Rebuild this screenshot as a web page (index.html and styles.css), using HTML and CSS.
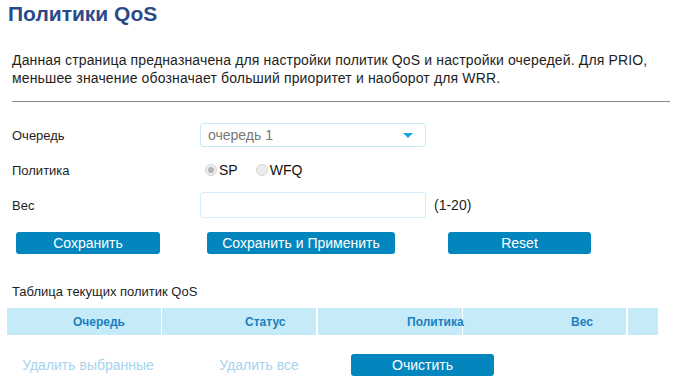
FILE: index.html
```html
<!DOCTYPE html>
<html lang="ru">
<head>
  <meta charset="UTF-8" />
  <title>Политики QoS</title>
  <link rel="stylesheet" href="styles.css">
</head>
<body>

<h1 class="title">Политики QoS</h1>
<p class="desc">Данная страница предназначена для настройки политик QoS и настройки очередей. Для PRIO, меньшее значение обозначает больший приоритет и наоборот для WRR.</p>
<hr class="sep">

<div class="form">
  <div class="row row-queue">
    <label class="lbl">Очередь</label>
    <div class="select">
      <span>очередь 1</span>
      <span class="arrow"></span>
    </div>
  </div>
  <div class="row row-policy">
    <label class="lbl">Политика</label>
    <span class="radio checked"></span><span class="radio-text">SP</span>
    <span class="radio"></span><span class="radio-text">WFQ</span>
  </div>
  <div class="row row-weight">
    <label class="lbl">Вес</label>
    <input class="field" type="text">
    <span class="hint">(1-20)</span>
  </div>
  <div class="btn-row">
    <button class="btn b-save">Сохранить</button>
    <button class="btn b-apply">Сохранить и Применить</button>
    <button class="btn b-reset">Reset</button>
  </div>
</div>

<p class="caption">Таблица текущих политик QoS</p>
<table class="qos">
  <tr>
    <th class="c1">Очередь</th>
    <th class="c2">Статус</th>
    <th class="c3">Политика</th>
    <th class="c4">Вес</th>
    <th class="c5"></th>
  </tr>
</table>

<div class="actions">
  <button class="btn ghost a-sel" disabled>Удалить выбранные</button>
  <button class="btn ghost a-all" disabled>Удалить все</button>
  <button class="btn a-clear">Очистить</button>
</div>

</body>
</html>
```

FILE: styles.css
```css
body {
  margin: 0;
  font-family: "Liberation Sans", Arial, sans-serif;
  color: #1e1e1e;
  background: #fff;
}
.title {
  margin: 0;
  padding: 2px 0 0 8px;
  font-size: 21px;
  line-height: 24px;
  color: #2b4a88;
}
.desc {
  margin: 25px 10px 0 12px;
  font-size: 14px;
  line-height: 18px;
  letter-spacing: 0.15px;
}
.sep {
  margin: 14px 10px 0 12px;
  border: none;
  border-top: 1px solid #8a8a8a;
  height: 0;
}
.form {
  padding-left: 12px;
}
.row {
  display: flex;
  align-items: center;
  font-size: 13px;
}
.row-queue { margin-top: 21px; height: 24px; }
.row-policy { margin-top: 11px; height: 24px; }
.row-weight { margin-top: 10px; height: 26px; }
.lbl {
  width: 188px;
}
.select {
  box-sizing: border-box;
  width: 226px;
  height: 24px;
  border: 1px solid #c8eaf7;
  border-radius: 3px;
  padding: 0 12px 0 7px;
  display: flex;
  align-items: center;
  justify-content: space-between;
  font-size: 14px;
  color: #777;
}
.arrow {
  width: 0;
  height: 0;
  border-left: 5px solid transparent;
  border-right: 5px solid transparent;
  border-top: 5px solid #1fa5e6;
}
.radio {
  box-sizing: border-box;
  width: 12px;
  height: 12px;
  border-radius: 50%;
  border: 1px solid #d6d6d6;
  background: #ececec;
  margin-left: 5px;
  position: relative;
}
.radio + .radio-text + .radio {
  margin-left: 18px;
}
.radio.checked::after {
  content: "";
  position: absolute;
  left: 2px;
  top: 2px;
  width: 6px;
  height: 6px;
  border-radius: 50%;
  background: #b5b5b5;
}
.radio-text {
  margin-left: 2px;
  font-size: 14px;
  color: #111;
}
.field {
  box-sizing: border-box;
  width: 226px;
  height: 26px;
  margin: 0;
  border: 1px solid #d3eef9;
  border-radius: 3px;
  padding: 0 6px;
}
.hint {
  margin-left: 8px;
  font-size: 14px;
}
.btn {
  box-sizing: border-box;
  height: 22px;
  border: none;
  border-radius: 3px;
  background: #0386be;
  color: #fff;
  font-family: inherit;
  font-size: 14px;
  padding: 0;
}
.btn-row {
  display: flex;
  margin-top: 14px;
}
.b-save { width: 144px; margin-left: 4px; }
.b-apply { width: 188px; margin-left: 47px; }
.b-reset { width: 143px; margin-left: 53px; }
.caption {
  margin: 30px 0 0 12px;
  font-size: 13px;
  line-height: 16px;
}
.qos {
  margin: 8px 0 0 7px;
  border-collapse: separate;
  border-spacing: 0;
  table-layout: fixed;
  width: 651px;
}
.qos th {
  box-sizing: border-box;
  height: 27px;
  padding: 0;
  background: #c6ebf8;
  color: #1a80c0;
  font-size: 12px;
  text-align: left;
  white-space: nowrap;
  overflow: visible;
  border-right: 1px solid #fff;
}
.qos .c1 { width: 155px; padding-left: 66px; }
.qos .c2 { width: 156px; padding-left: 83px; border-right-width: 2px; }
.qos .c3 { width: 145px; padding-left: 89px; }
.qos .c4 { width: 165px; padding-left: 108px; border-right-width: 2px; }
.qos .c5 { width: 30px; border-right: none; }
.actions {
  display: flex;
  margin-top: 19px;
  padding-left: 12px;
}
.ghost {
  background: transparent;
  color: #a6d3ed;
}
.a-sel { width: 144px; margin-left: 4px; }
.a-all { width: 144px; margin-left: 27px; }
.a-clear { width: 143px; margin-left: 20px; }
```
